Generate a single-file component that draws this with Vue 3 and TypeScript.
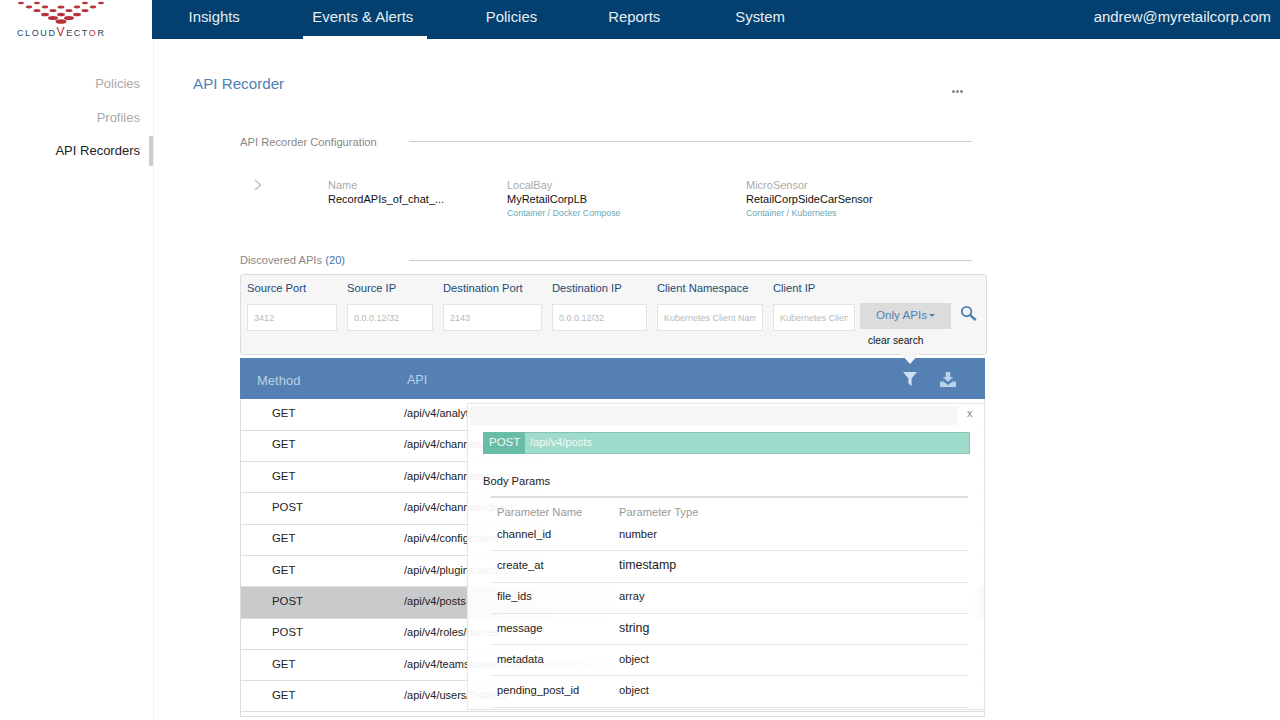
<script setup lang="ts">
const navItems: string[] = ['Insights', 'Events & Alerts', 'Policies', 'Reports', 'System']
const sideItems: string[] = ['Policies', 'Profiles', 'API Recorders']
const details = [
  { label: 'Name', value: 'RecordAPIs_of_chat_...', sub: '' },
  { label: 'LocalBay', value: 'MyRetailCorpLB', sub: 'Container / Docker Compose' },
  { label: 'MicroSensor', value: 'RetailCorpSideCarSensor', sub: 'Container / Kubernetes' },
]
const filters = [
  { label: 'Source Port', hint: '3412', width: 90 },
  { label: 'Source IP', hint: '0.0.0.12/32', width: 86 },
  { label: 'Destination Port', hint: '2143', width: 99 },
  { label: 'Destination IP', hint: '0.0.0.12/32', width: 95 },
  { label: 'Client Namespace', hint: 'Kubernetes Client Namespace', width: 106 },
  { label: 'Client IP', hint: 'Kubernetes Client IP', width: 82 },
]
const rows = [
  { method: 'GET', api: '/api/v4/analytics/old' },
  { method: 'GET', api: '/api/v4/channels/members' },
  { method: 'GET', api: '/api/v4/channels/search' },
  { method: 'POST', api: '/api/v4/channels/direct' },
  { method: 'GET', api: '/api/v4/config/client' },
  { method: 'GET', api: '/api/v4/plugins/webapp' },
  { method: 'POST', api: '/api/v4/posts', selected: true },
  { method: 'POST', api: '/api/v4/roles/names' },
  { method: 'GET', api: '/api/v4/teams/name/channels/search/users' },
  { method: 'GET', api: '/api/v4/users/*/status' },
]
const params = [
  { name: 'channel_id', type: 'number', big: false },
  { name: 'create_at', type: 'timestamp', big: true },
  { name: 'file_ids', type: 'array', big: false },
  { name: 'message', type: 'string', big: true },
  { name: 'metadata', type: 'object', big: false },
  { name: 'pending_post_id', type: 'object', big: false },
]
const dots: [number, number, number, number][] = [
  [21, 3, 3, 1.2], [37, 3, 3, 1.2], [85, 3, 3, 1.2], [101, 3, 3, 1.2],
  [29, 7, 3.2, 1.4], [45, 7, 3.2, 1.4], [61, 7, 3.4, 1.5], [77, 7, 3.2, 1.4], [93, 7, 3.2, 1.4],
  [37, 10.5, 3.5, 1.5], [53, 10.5, 3.5, 1.6], [69, 10.5, 3.5, 1.6], [85, 10.5, 3.5, 1.5],
  [45, 14.5, 4, 1.8], [61, 14.5, 4, 1.8], [77, 14.5, 4, 1.8],
  [53, 18, 5, 2], [69, 18, 5, 2],
  [61, 21.5, 5.5, 2.3],
]
</script>

<template>
  <div class="page">
    <header class="topbar">
      <div class="logo">
        <svg class="logo-mark" width="122" height="25" viewBox="0 0 122 25" aria-hidden="true">
          <ellipse v-for="(d, i) in dots" :key="i" :cx="d[0]" :cy="d[1]" :rx="d[2]" :ry="d[3]" fill="#b8323a" />
        </svg>
        <div class="logo-text">CLOUD<span class="logo-v">V</span>ECT<span class="logo-o">O</span>R</div>
      </div>
      <nav class="nav">
        <a v-for="item in navItems" :key="item" class="nav-item" :class="{ active: item === 'Events & Alerts' }">{{ item }}</a>
        <span class="account">andrew@myretailcorp.com</span>
      </nav>
    </header>

    <div class="layout">
      <aside class="side">
        <a v-for="item in sideItems" :key="item" class="side-item" :class="{ current: item === 'API Recorders' }">{{ item }}</a>
      </aside>

      <main class="main">
        <div class="title-row">
          <h1 class="title">API Recorder</h1>
          <span class="more"><i></i><i></i><i></i></span>
        </div>

        <div class="content">
          <div class="section-head first">
            <span class="section-label">API Recorder Configuration</span>
            <span class="section-line"></span>
          </div>

          <div class="config">
            <svg class="chevron" width="10" height="14" viewBox="0 0 10 14" aria-hidden="true">
              <path d="M2 2l5.5 5L2 12" fill="none" stroke="#c4c4c4" stroke-width="1.6" />
            </svg>
            <div v-for="d in details" :key="d.label" class="detail">
              <div class="detail-label">{{ d.label }}</div>
              <div class="detail-value">{{ d.value }}</div>
              <div class="detail-sub">{{ d.sub }}</div>
            </div>
          </div>

          <div class="section-head second">
            <span class="section-label">Discovered APIs <b class="count">(20)</b></span>
            <span class="section-line"></span>
          </div>

          <div class="filter-panel">
            <div v-for="f in filters" :key="f.label" class="field" :style="{ width: f.width + 'px' }">
              <label class="field-label">{{ f.label }}</label>
              <input class="field-input" :placeholder="f.hint" />
            </div>
            <div class="tools">
              <button class="only-btn">Only APIs<span class="caret-small"></span></button>
              <div class="clear">clear search</div>
            </div>
            <svg class="search" width="17" height="17" viewBox="0 0 18 18" aria-hidden="true">
              <circle cx="7" cy="7" r="5" fill="none" stroke="#4f81b5" stroke-width="2" />
              <path d="M10.8 10.8l5.2 4.6" stroke="#4f81b5" stroke-width="2.6" stroke-linecap="round" />
            </svg>
            <span class="panel-caret"></span>
          </div>

          <section class="table">
            <div class="thead">
              <span class="th-method">Method</span>
              <span class="th-api">API</span>
              <svg class="th-filter" width="14" height="14" viewBox="0 0 14 14" aria-hidden="true">
                <path d="M0 0h14L8.6 6.4V14L5.4 11.6V6.4z" fill="#cfe0f2" />
              </svg>
              <svg class="th-download" width="16" height="15" viewBox="0 0 16 15" aria-hidden="true">
                <path d="M5.8 0h4.4v5h3L8 10 2.8 5h3z" fill="#b9d1ea" />
                <path d="M0 9.5h3.5L8 13l4.5-3.5H16V15H0z" fill="#b9d1ea" />
              </svg>
            </div>
            <div class="tbody">
              <div v-for="r in rows" :key="r.api" class="row" :class="{ selected: r.selected }">
                <span class="cell-method">{{ r.method }}</span>
                <span class="cell-api">{{ r.api }}</span>
              </div>
            </div>

            <div class="popover">
              <div class="pop-top">
                <div class="pop-bar"></div>
                <span class="pop-close">x</span>
              </div>
              <div class="endpoint">
                <span class="endpoint-method">POST</span>
                <span class="endpoint-path">/api/v4/posts</span>
              </div>
              <div class="params-title">Body Params</div>
              <div class="params">
                <div class="params-head">
                  <span class="p-name">Parameter Name</span>
                  <span>Parameter Type</span>
                </div>
                <div v-for="p in params" :key="p.name" class="param-row">
                  <span class="p-name">{{ p.name }}</span>
                  <span class="p-type" :class="{ big: p.big }">{{ p.type }}</span>
                </div>
              </div>
            </div>
          </section>
        </div>
      </main>
    </div>
  </div>
</template>

<style>
html, body { margin: 0; background: #fff; }
</style>

<style scoped>
* { box-sizing: border-box; }
.page {
  width: 1280px;
  height: 720px;
  overflow: hidden;
  font-family: "Liberation Sans", Arial, sans-serif;
  color: #222;
  background: #fff;
}
.topbar { display: flex; height: 39px; }
.logo { width: 152px; flex: none; position: relative; overflow: hidden; }
.logo-mark { display: block; }
.logo-text {
  margin: 2px 0 0 17px;
  font-size: 9px;
  line-height: 12px;
  letter-spacing: 1.6px;
  color: #24455f;
  white-space: nowrap;
}
.logo-v { color: #b8323a; font-size: 12px; line-height: 10px; }
.logo-o { color: #b8323a; }
.nav {
  flex: 1;
  display: flex;
  padding-left: 25px;
  gap: 49px;
  background: #03406f;
  color: #e6edf3;
  font-size: 14.9px;
  line-height: 34px;
}
.nav-item { padding: 0 11.5px; height: 39px; }
.nav-item.active { border-bottom: 3px solid #fff; padding: 0 14px 0 9px; margin-left: 3px; margin-right: -2px; }
.nav-item:nth-child(4) { margin-left: -1px; }
.nav-item:nth-child(5) { margin-left: 3px; }
.account { margin-left: auto; padding-right: 9px; }

.layout { display: flex; height: 681px; }
.side {
  width: 154px;
  flex: none;
  position: relative;
  border-right: 1px solid #f0f0f0;
  padding: 35px 13px 0 0;
  display: flex;
  flex-direction: column;
  align-items: flex-end;
  font-size: 13px;
  color: #aaa;
}
.side-item { line-height: 20px; margin-bottom: 14px; }
.side-item.current { color: #222; margin-top: -1px; position: relative; }
.side-item.current::after {
  content: "";
  position: absolute;
  right: -13px;
  top: -5px;
  width: 4px;
  height: 30px;
  background: #ccc;
}
.main { flex: 1; padding-top: 35px; min-width: 0; }
.title-row {
  display: flex;
  justify-content: space-between;
  padding: 0 317px 0 39px;
  height: 20px;
}
.title { margin: 0; font-size: 15.2px; line-height: 20px; font-weight: 400; color: #4f81b5; }
.more { display: flex; gap: 1px; margin-top: 16px; height: 3px; }
.more i { width: 3px; height: 3px; background: #888; border-radius: 50%; }
.content { margin-left: 86px; width: 745px; }
.section-head {
  display: flex;
  align-items: center;
  height: 16px;
  padding-right: 13px;
  font-size: 11px;
  color: #888;
}
.section-head.first { margin-top: 40px; }
.section-head.first .section-line { margin-top: -2px; }
.section-head.second { margin-top: 32px; }
.section-label { width: 169px; flex: none; font-size: 11.2px; }
.section-line { flex: 1; height: 1px; background: #ccc; }
.count { font-weight: 400; color: #3e79ad; }
.config { display: flex; margin-top: 28px; height: 42px; }
.chevron { margin: 0 0 0 13px; flex: none; }
.detail { font-size: 11px; line-height: 14px; }
.detail:nth-of-type(1) { width: 179px; margin-left: 65px; }
.detail:nth-of-type(2) { width: 239px; }
.detail-label { color: #aaa; }
.detail-value { color: #111; font-size: 11px; }
.detail-sub { color: #68a9b6; font-size: 8.8px; }

.filter-panel {
  position: relative;
  display: flex;
  gap: 10px;
  margin-top: 6px;
  width: 747px;
  height: 81px;
  padding: 5px 0 0 6px;
  background: #f6f6f6;
  border: 1px solid #ddd;
  border-radius: 3px;
}
.field-label {
  display: block;
  font-size: 11.2px;
  line-height: 16px;
  color: #204a73;
  white-space: nowrap;
}
.field-input {
  display: block;
  width: 100%;
  height: 27px;
  margin-top: 8px;
  padding: 0 6px;
  border: 1px solid #e4e4e4;
  border-radius: 0;
  background: #fff;
  font: 9px "Liberation Sans", Arial, sans-serif;
  outline: 0;
}
.field-input::placeholder { color: #b9b9b9; opacity: 1; }
.tools { margin-left: -5px; width: 91px; padding-top: 23px; }
.only-btn {
  display: block;
  width: 91px;
  height: 26px;
  padding: 0 0 3px;
  border: 0;
  background: #dcdcdc;
  color: #4f81b5;
  font: 11.6px "Liberation Sans", Arial, sans-serif;
}
.caret-small {
  display: inline-block;
  margin-left: 2px;
  vertical-align: 2px;
  border-left: 3.5px solid transparent;
  border-right: 3.5px solid transparent;
  border-top: 3.5px solid #4f81b5;
}
.clear { margin: 5px 0 0 8px; font-size: 10.2px; line-height: 14px; color: #111; white-space: nowrap; }
.search { margin: 25px 0 0 -1px; flex: none; }
.panel-caret {
  position: absolute;
  z-index: 2;
  left: 660px;
  bottom: -10px;
  width: 0;
  height: 0;
  border-left: 9px solid transparent;
  border-right: 9px solid transparent;
  border-top: 10px solid #f6f6f6;
}

.table {
  position: relative;
  margin-top: 3px;
  border-bottom: 1px solid #ddd;
  height: 359px;
}
.thead {
  position: relative;
  display: flex;
  align-items: center;
  height: 41px;
  background: #5580b3;
  color: #b9d0e8;
  font-size: 13px;
}
.th-method { width: 167px; padding-left: 17px; flex: none; margin-top: 3px; }
.th-api { flex: 1; font-size: 12.5px; margin-top: 2px; }
.th-filter { flex: none; margin: 0 23px 0 0; }
.th-download { flex: none; margin: 1px 29px 0 0; }
.tbody {
  height: 318px;
  padding-top: 0.5px;
  border-left: 1px solid #ddd;
  border-right: 1px solid #ddd;
}
.row {
  display: flex;
  height: 31.3px;
  padding-bottom: 3px;
  align-items: center;
  border-bottom: 1px solid #ddd;
  font-size: 11.4px;
  color: #222;
}
.row.selected { background: #c9cacb; }
.cell-method { width: 163px; padding-left: 31px; flex: none; }
.cell-api { font-size: 11px; white-space: nowrap; }

.popover {
  position: absolute;
  top: 45px;
  left: 227px;
  right: 0;
  height: 307px;
  padding: 2px 0 0 2px;
  border: 1px solid #e6e6e6;
  background: linear-gradient(to right, rgba(255, 255, 255, 0.92), rgba(255, 255, 255, 0.97) 20%, #fff 30%, #fff 98%, rgba(255, 255, 255, 0.88));
}
.pop-top { display: flex; align-items: flex-start; height: 19px; }
.pop-bar { width: 488px; height: 19px; background: #f7f7f7; flex: none; }
.pop-close { margin-left: 9px; font-size: 11px; color: #888; line-height: 14px; }
.endpoint {
  display: flex;
  height: 22px;
  margin: 7px 14px 0 13px;
  background: #a0dccb;
  border: 1px solid #85c4ae;
  color: #f1f9f6;
  font-size: 11px;
  line-height: 19px;
}
.endpoint-method { width: 42px; margin: -1px 0 -1px -1px; padding: 1px 0 0 6px; background: #69bca5; font-size: 11.5px; }
.endpoint-path { padding-left: 5px; }
.params-title { margin: 19px 0 0 13px; font-size: 11.2px; line-height: 16px; color: #222; }
.params { margin: 7px 16px 0 21px; border-top: 2px solid #ddd; }
.params-head { display: flex; height: 22px; padding: 7px 0 0 6px; font-size: 11.2px; line-height: 14px; color: #999; }
.param-row {
  display: flex;
  align-items: center;
  height: 31.3px;
  padding: 0 0 3px 6px;
  border-bottom: 1px solid #e6e6e6;
  font-size: 11.2px;
  color: #222;
}
.p-name { width: 122px; flex: none; }
.p-type.big { font-size: 12.4px; }
</style>
